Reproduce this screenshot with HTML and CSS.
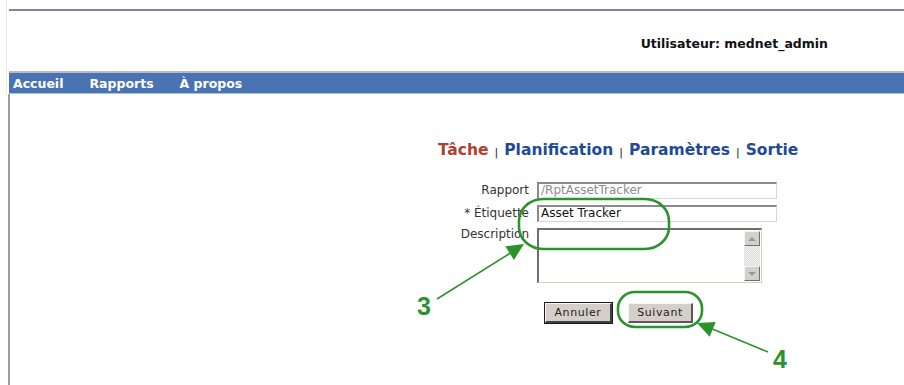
FILE: index.html
```html
<!DOCTYPE html>
<html lang="fr">
<head>
<meta charset="utf-8">
<title>Tâche</title>
<link rel="stylesheet" href="styles.css">
</head>
<body>
<div class="top">
  <div class="rule"></div>
  <div class="header"><span class="user">Utilisateur: mednet_admin</span></div>
  <nav class="nav">
    <a class="nav-item">Accueil</a>
    <a class="nav-item">Rapports</a>
    <a class="nav-item">À propos</a>
  </nav>
</div>
<div class="content">
  <div class="tabs">
    <span class="tab tab-active">Tâche</span><span class="sep">|</span><span class="tab">Planification</span><span class="sep">|</span><span class="tab">Paramètres</span><span class="sep">|</span><span class="tab">Sortie</span>
  </div>
  <div class="form">
    <label class="label">Rapport</label>
    <div class="input input-disabled">/RptAssetTracker</div>
    <label class="label">* Étiquette</label>
    <div class="input">Asset Tracker</div>
    <label class="label label-top">Description</label>
    <div class="textarea">
      <div class="scroll">
        <div class="sbtn"><span class="tri tri-up"></span></div>
        <div class="strack"></div>
        <div class="sbtn"><span class="tri tri-down"></span></div>
      </div>
    </div>
    <div></div>
    <div class="buttons">
      <button class="btn btn-default">Annuler</button>
      <button class="btn">Suivant</button>
    </div>
  </div>
</div>
<svg class="notes" width="904" height="385" viewBox="0 0 904 385">
  <rect x="519" y="199" width="150" height="50" rx="24" ry="22" fill="none" stroke="#2b932b" stroke-width="2.6"/>
  <rect x="618" y="292" width="84" height="35" rx="17" ry="16" fill="none" stroke="#2b932b" stroke-width="2.6"/>
  <line x1="437" y1="299" x2="512" y2="252" stroke="#2b932b" stroke-width="1.5"/>
  <polygon points="524,244 505.3,246.3 513.9,259.9" fill="#2b932b"/>
  <line x1="768" y1="352" x2="710" y2="328" stroke="#2b932b" stroke-width="1.5"/>
  <polygon points="697,323 715.7,322 709.7,336.8" fill="#2b932b"/>
  <text x="417" y="315" class="num">3</text>
  <text x="773" y="368" class="num">4</text>
</svg>
</body>
</html>
```
FILE: styles.css
```css
html, body {
  margin: 0;
  padding: 0;
  background: #ffffff;
  width: 904px;
  height: 385px;
  overflow: hidden;
  font-family: "DejaVu Sans", Verdana, sans-serif;
}

body {
  position: relative;
}

.top {
  margin-left: 6px;
  padding-top: 8px;
  border-left: 1px solid #ececec;
}

.rule {
  margin-top: 1px;
  margin-left: 2px;
  height: 2px;
  background: #8b7da6;
}

.header {
  height: 60px;
  box-sizing: border-box;
  padding-top: 25px;
  padding-right: 76px;
  display: flex;
  justify-content: flex-end;
}

.user {
  font-weight: bold;
  font-size: 12.5px;
  line-height: 15px;
  color: #111;
}

.nav {
  margin-left: 2px;
  border-top: 2px solid #bfb6cc;
  border-bottom: 1px solid #a9c0e0;
  background: #4a73b3;
  height: 20px;
  display: flex;
  align-items: flex-start;
  gap: 26px;
  padding-left: 4px;
}

.nav-item {
  color: #ffffff;
  font-weight: bold;
  font-size: 12.5px;
  line-height: 16px;
  padding-top: 3px;
}

.content {
  margin-left: 8px;
  border-left: 2px solid #9b99aa;
  height: 291px;
}

.tabs {
  padding-top: 47px;
  padding-left: 428px;
  line-height: 18px;
  white-space: nowrap;
}

.tab {
  font-size: 15.5px;
  font-weight: bold;
  color: #1f4a96;
}

.tab-active {
  color: #b0402f;
}

.sep {
  font-size: 11px;
  color: #222;
  margin: 0 6px;
  vertical-align: -1px;
}

.form {
  margin-top: 20px;
  margin-left: 420px;
  display: grid;
  grid-template-columns: 99px 240px;
  column-gap: 8px;
  row-gap: 6px;
  align-items: center;
}

.label {
  font-size: 12px;
  color: #333;
  text-align: right;
  line-height: 17px;
  white-space: nowrap;
}

.label-top {
  align-self: start;
  margin-top: -2px;
}

.input {
  height: 17px;
  box-sizing: border-box;
  border-style: solid;
  border-width: 2px 1px 1px 2px;
  border-color: #8a8a8a #d6d6d6 #d6d6d6 #8a8a8a;
  background: #fff;
  font-size: 12px;
  line-height: 13px;
  padding-left: 2px;
  color: #111;
  white-space: nowrap;
}

.input-disabled {
  color: #8c8c8c;
}

.textarea {
  width: 225px;
  height: 55px;
  box-sizing: border-box;
  border-style: solid;
  border-width: 2px 1px 1px 2px;
  border-color: #6e6e6e #d4d0c8 #d4d0c8 #6e6e6e;
  background: #fff;
  display: flex;
  justify-content: flex-end;
  padding: 1px 1px 1px 0;
}

.scroll {
  width: 16px;
  display: flex;
  flex-direction: column;
  background: repeating-conic-gradient(#f2f2f2 0 25%, #dcdcdc 0 50%) 0 0 / 2px 2px;
}

.sbtn {
  height: 15px;
  box-sizing: border-box;
  background: #d4d0c8;
  border-style: solid;
  border-width: 1px;
  border-color: #f4f4f4 #707070 #707070 #f4f4f4;
  display: flex;
  align-items: center;
  justify-content: center;
}

.strack {
  flex: 1;
}

.tri {
  width: 0;
  height: 0;
  border-left: 4px solid transparent;
  border-right: 4px solid transparent;
}

.tri-up {
  border-bottom: 4px solid #9a9a9a;
}

.tri-down {
  border-top: 4px solid #9a9a9a;
}

.buttons {
  margin-top: 14px;
  padding-left: 8px;
  display: flex;
  gap: 16px;
}

.btn {
  height: 20px;
  box-sizing: border-box;
  background: #d4d0c8;
  border-style: solid;
  border-width: 1px 2px 2px 1px;
  border-color: #f6f6f6 #5a5a5a #5a5a5a #f6f6f6;
  font-family: "DejaVu Sans", Verdana, sans-serif;
  font-size: 11px;
  letter-spacing: 0.6px;
  color: #222;
  padding: 0 8px;
  width: 65px;
  line-height: 16px;
}

.btn-default {
  width: 67px;
  outline: 1px solid #1a1a1a;
  outline-offset: 0;
  border-color: #f6f6f6 #404040 #404040 #f6f6f6;
}

.notes {
  position: absolute;
  left: 0;
  top: 0;
  pointer-events: none;
}

.num {
  font-family: "Liberation Sans", Arial, sans-serif;
  font-weight: bold;
  font-size: 25px;
  fill: #2b932b;
}
```
